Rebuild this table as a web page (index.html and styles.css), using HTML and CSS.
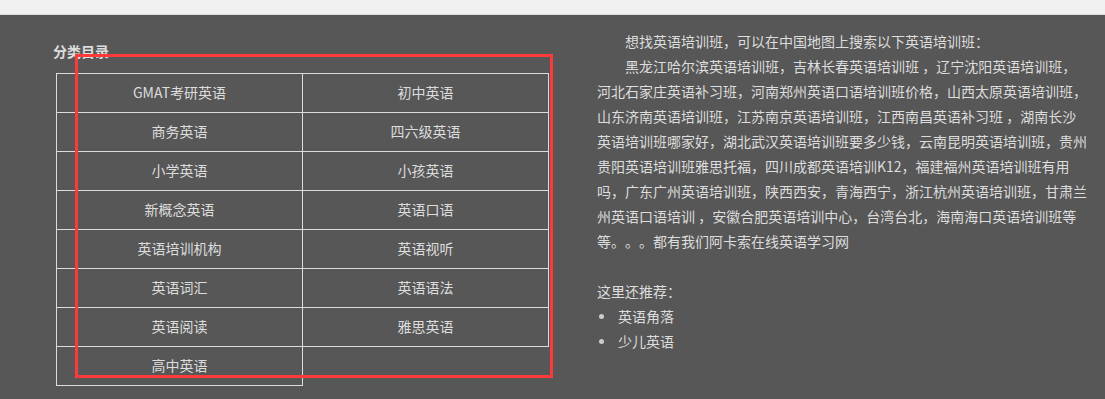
FILE: index.html
```html
<!DOCTYPE html>
<html lang="zh-CN">
<head>
  <meta charset="UTF-8" />
  <title>分类目录 - 英语培训</title>
  <link rel="stylesheet" href="styles.css">
</head>
<body>
  <div class="top-bar"></div>

  <div class="content">
    <div class="catalog">
      <h3 class="catalog-title">分类目录</h3>
      <table class="catalog-table">
        <tr><td>GMAT考研英语</td><td>初中英语</td></tr>
        <tr><td>商务英语</td><td>四六级英语</td></tr>
        <tr><td>小学英语</td><td>小孩英语</td></tr>
        <tr><td>新概念英语</td><td>英语口语</td></tr>
        <tr><td>英语培训机构</td><td>英语视听</td></tr>
        <tr><td>英语词汇</td><td>英语语法</td></tr>
        <tr><td>英语阅读</td><td>雅思英语</td></tr>
        <tr><td>高中英语</td></tr>
      </table>
      <div class="highlight-box"></div>
    </div>

    <div class="intro">
      <p class="indent">想找英语培训班，可以在中国地图上搜索以下英语培训班：</p>
      <p class="indent">黑龙江哈尔滨英语培训班，吉林长春英语培训班 ，辽宁沈阳英语培训班，河北石家庄英语补习班，河南郑州英语口语培训班价格，山西太原英语培训班，山东济南英语培训班，江苏南京英语培训班，江西南昌英语补习班 ，湖南长沙英语培训班哪家好，湖北武汉英语培训班要多少钱，云南昆明英语培训班，贵州贵阳英语培训班雅思托福，四川成都英语培训K12，福建福州英语培训班有用吗，广东广州英语培训班，陕西西安，青海西宁，浙江杭州英语培训班，甘肃兰州英语口语培训 ，安徽合肥英语培训中心，台湾台北，海南海口英语培训班等等。。。都有我们阿卡索在线英语学习网</p>

      <p class="recommend">这里还推荐：</p>
      <ul class="recommend-list">
        <li>英语角落</li>
        <li>少儿英语</li>
      </ul>
    </div>
  </div>
</body>
</html>
```

FILE: styles.css
```css
* {
  margin: 0;
  padding: 0;
  box-sizing: border-box;
}

body {
  background: #575757;
  font-family: "Noto Sans CJK SC", "Noto Sans", sans-serif;
  font-size: 14px;
  color: #dddddd;
  min-height: 100vh;
  text-spacing-trim: space-all;
}

.top-bar {
  height: 15px;
  background: #f1f1f1;
  border-bottom: 1px solid #dcdcdc;
}

.content {
  display: flex;
  align-items: flex-start;
  padding-left: 53px;
}

/* left column: category table */
.catalog {
  position: relative;
  width: 496px;
  padding-top: 24px;
}

.catalog-title {
  font-size: 14px;
  font-weight: 700;
  line-height: 25px;
  margin-bottom: 9px;
}

.catalog-table {
  margin-left: 3px;
  width: 493px;
  border-collapse: collapse;
  table-layout: fixed;
}

.catalog-table td {
  width: 50%;
  height: 39px;
  border: 1px solid #dcdcdc;
  text-align: center;
  vertical-align: middle;
  line-height: 20px;
  padding: 0 0 2px;
}

.highlight-box {
  position: absolute;
  left: 22px;
  top: 39px;
  width: 478px;
  height: 324px;
  border: 3px solid #fc3a3a;
  pointer-events: none;
}

/* right column: intro text */
.intro {
  width: 492px;
  margin-left: 48px;
  padding-top: 14px;
  line-height: 25px;
}

.indent {
  text-indent: 2em;
}

.recommend {
  margin-top: 25px;
}

.recommend-list {
  list-style: none;
}

.recommend-list li {
  position: relative;
  padding-left: 21px;
}

.recommend-list li::before {
  content: "";
  position: absolute;
  left: 2px;
  top: 10px;
  width: 5px;
  height: 5px;
  border-radius: 50%;
  background: #cccccc;
}
```
